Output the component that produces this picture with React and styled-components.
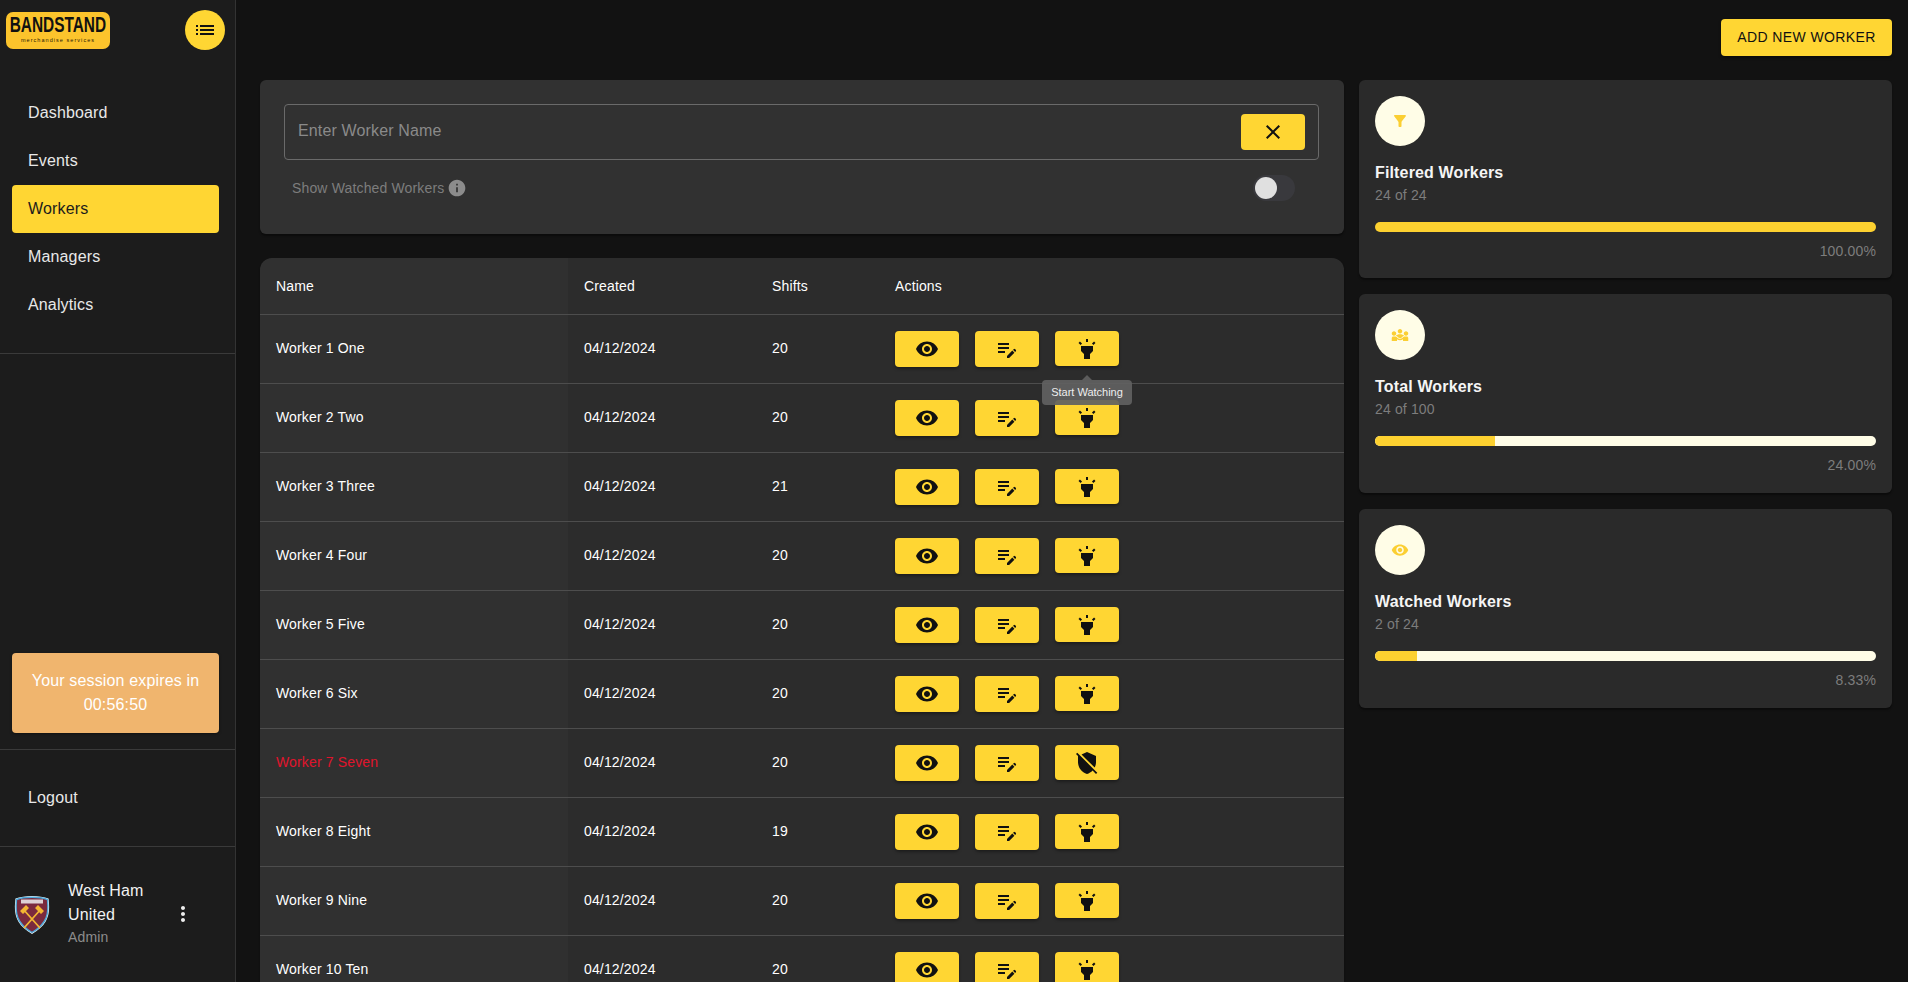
import React from "react";
import styled, { createGlobalStyle } from "styled-components";
import {
  MdVisibility, MdEditNote, MdHighlight, MdRemoveModerator, MdFilterAlt, MdDiversity3,
  MdList, MdClose, MdInfo, MdMoreVert,
} from "react-icons/md";

const Y = "#ffd633";
const FONT = '"Liberation Sans", Arial, sans-serif';

const Global = createGlobalStyle`
  html, body { margin: 0; padding: 0; height: 100%; background: #121212; overflow: hidden; }
  body { font-family: ${FONT}; color: #fff; letter-spacing: .15px; }
  * { box-sizing: border-box; }
`;

const Shell = styled.div`display: flex; height: 982px; overflow: hidden; background: #121212;`;
const Sidebar = styled.aside`
  width: 236px; flex: none; height: 982px; background: #1c1c1c; border-right: 1px solid #333;
  display: flex; flex-direction: column;
`;
const SideHead = styled.div`display: flex; align-items: center; justify-content: space-between; padding: 0 10px 0 6px; height: 60px;`;
const Logo = styled.div`
  width: 104px; height: 37px; background: #fcc42c; border-radius: 7px; color: #111;
  display: flex; flex-direction: column; align-items: center; justify-content: flex-start;
`;
const LogoMain = styled.span`display: block; font: 700 22px/24px ${FONT}; letter-spacing: 0; transform: scaleX(.7); white-space: nowrap; margin-top: 1px;`;
const LogoSub = styled.span`display: block; font: 400 5.5px/7px ${FONT}; letter-spacing: 1.05px; white-space: nowrap; color: #2a2005;`;
const Round = styled.button`
  width: 40px; height: 40px; border: 0; border-radius: 50%; background: ${Y}; color: #111; padding: 0;
  display: flex; align-items: center; justify-content: center; font-size: 24px;
`;
const Nav = styled.nav`padding: 29px 16px 0 12px; display: flex; flex-direction: column;`;
const NavItem = styled.div`
  height: 48px; padding-left: 16px; display: flex; align-items: center; font-size: 16px; border-radius: 4px;
  color: ${p => (p.$active ? "#1c1c1c" : "#e8e8e8")};
  background: ${p => (p.$active ? Y : "transparent")};
`;
const Divider = styled.hr`margin: ${p => p.$m || "0"}; border: 0; border-top: 1px solid #3a3a3a;`;
const Session = styled.div`
  margin: auto 16px 16px 12px; height: 80px; background: #f0b56e; border-radius: 4px; text-align: center;
  color: #fff; font-size: 16px; line-height: 24px; padding-top: 16px;
  box-shadow: 0 1px 3px rgba(0,0,0,.4);
`;
const LogoutRow = styled.div`height: 96px; padding-left: 28px; display: flex; align-items: center; font-size: 16px; color: #e8e8e8;`;
const Profile = styled.div`height: 135px; padding: 0 0 0 14px; display: flex; align-items: center;`;
const Crest = styled.svg`width: 36px; height: 41px; flex: none; margin-right: 18px;`;
const ProfileText = styled.div`width: 90px; font-size: 16px; line-height: 24px; color: #f2f2f2; margin-top: -3px;`;
const ProfileRole = styled.div`font-size: 14px; line-height: 20px; color: #8c8c8c;`;
const More = styled.div`font-size: 24px; color: #eee; display: flex; margin-left: 13px; margin-top: -2px;`;

const Main = styled.main`flex: 1; min-width: 0; padding: 19px 16px 0 24px;`;
const TopBar = styled.div`display: flex; justify-content: flex-end; height: 61px;`;
const AddBtn = styled.button`
  width: 171px; height: 37px; border: 0; border-radius: 4px; background: ${Y}; color: #111; padding: 0 0 1px;
  font: 500 14px ${FONT}; letter-spacing: .4px; box-shadow: 0 2px 3px rgba(0,0,0,.4);
`;
const Columns = styled.div`display: grid; grid-template-columns: 1084px 533px; gap: 15px; align-items: start;`;
const Left = styled.div`display: flex; flex-direction: column; gap: 24px;`;
const Right = styled.div`display: flex; flex-direction: column; gap: 16px;`;
const Card = styled.section`
  background: #2a2a2a;
  border-radius: 6px; box-shadow: 0 2px 2px rgba(0,0,0,.4);
`;
const SearchCard = styled(Card)`height: 154px; padding: 24px 25px 0 24px; background: #313131;`;
const SearchBox = styled.div`
  height: 56px; border: 1px solid #6a6a6a; border-radius: 4px; display: flex; align-items: center;
  justify-content: space-between; padding: 0 13px;
`;
const Placeholder = styled.span`font-size: 16px; color: #8a8a8a; margin-top: -2px;`;
const ClearBtn = styled.button`
  width: 64px; height: 36px; border: 0; border-radius: 4px; background: ${Y}; color: #111; padding: 0;
  display: flex; align-items: center; justify-content: center; font-size: 24px;
`;
const SwitchRow = styled.div`display: flex; align-items: center; justify-content: space-between; padding: 15px 24px 0 8px;`;
const SwitchLabel = styled.div`display: flex; align-items: center; gap: 3px; font-size: 14px; color: #7d7d7d; svg { color: #8c8c8c; }`;
const Track = styled.div`position: relative; width: 42px; height: 26px; border-radius: 13px; background: #39393d;`;
const Thumb = styled.div`position: absolute; left: 2px; top: 2px; width: 22px; height: 22px; border-radius: 50%; background: #e0e0e0;`;

const TableCard = styled(Card)`
  border-radius: 12px 12px 0 0; height: 800px;
  background: linear-gradient(90deg, #303030 308px, #2c2c2c 308px);
`;
const Row = styled.div`
  display: grid; grid-template-columns: 308px 188px 123px 1fr; align-items: center; padding-left: 16px;
  height: ${p => (p.$head ? 57 : 69)}px; border-bottom: 1px solid #4d4d4d; font-size: 14px;
  color: ${p => (p.$red ? "#e0142c" : "#fff")};
`;
const Cell = styled.div`color: ${p => (p.$white ? "#fff" : "inherit")}; margin-top: ${p => (p.$th ? 0 : -2)}px;`;
const Actions = styled.div`display: flex; gap: 16px; align-items: flex-start; position: relative; height: 36px;`;
const ActBtn = styled.button`
  width: 64px; height: ${p => (p.$short ? 35 : 36)}px; border: 0; border-radius: 4px; background: ${Y}; color: #111; padding: 0;
  display: flex; align-items: center; justify-content: center; font-size: 24px; box-shadow: 0 2px 3px rgba(0,0,0,.35);
`;
const Tooltip = styled.div`
  position: absolute; left: 147px; top: 49px; width: 90px; height: 25px; background: rgba(97,97,97,.92); color: #eee;
  border-radius: 4px; font-size: 11px; letter-spacing: 0; line-height: 25px; text-align: center; z-index: 3; white-space: nowrap;
  &::before {
    content: ""; position: absolute; left: 40px; top: -5px; border: 5px solid transparent; border-top: 0;
    border-bottom: 5px solid rgba(97,97,97,.92);
  }
`;

const StatCard = styled(Card)`height: ${p => p.$h}px; padding: 16px;`;
const Circle = styled.div`
  width: 50px; height: 50px; border-radius: 50%; background: #fffde7; color: #fbcf33;
  display: flex; align-items: center; justify-content: center; font-size: 18px;
`;
const StatTitle = styled.div`font-size: 16px; font-weight: 700; line-height: 24px; margin-top: 15px; color: #f5f5f5;`;
const StatSub = styled.div`font-size: 14px; line-height: 20px; color: #7d7d7d;`;
const Bar = styled.div`height: 10px; border-radius: 5px; background: #fffde7; overflow: hidden; margin-top: 17px;`;
const Fill = styled.div`height: 100%; background: #fdd130;`;
const Pct = styled.div`font-size: 14px; line-height: 20px; color: #7d7d7d; text-align: right; margin-top: 9px;`;

const workers = ["Worker 1 One", "Worker 2 Two", "Worker 3 Three", "Worker 4 Four", "Worker 5 Five", "Worker 6 Six", "Worker 7 Seven", "Worker 8 Eight", "Worker 9 Nine", "Worker 10 Ten"];
const shifts = [20, 20, 21, 20, 20, 20, 20, 19, 20, 20];
const stats = [
  { icon: <MdFilterAlt />, title: "Filtered Workers", sub: "24 of 24", pct: 100, h: 198 },
  { icon: <MdDiversity3 />, title: "Total Workers", sub: "24 of 100", pct: 24, h: 199 },
  { icon: <MdVisibility />, title: "Watched Workers", sub: "2 of 24", pct: 8.33, h: 199 },
];

const CrestIcon = () => (
  <Crest viewBox="0 0 36 41">
    <path d="M1.5 4.5C10 1 26 1 34.5 4.5c2 15 0 26-16.500 35.500C1.500 30.500 -.5 19.500 1.500 4.500z" fill="#fff" />
    <path d="M2.500 5.500C10 2.500 26 2.500 33.500 5.500c1.500 14 0 24-15.500 33C2.500 29.500 1 19.500 2.500 5.500z" fill="#7a2a3e" stroke="#4ea8d8" strokeWidth="1.400" />
    <path d="M9 15l17 19M27 15L10 34" stroke="#f2b632" strokeWidth="1.800" />
    <path d="M6 17l6-6 3 3-6 6zM30 17l-6-6-3 3 6 6z" fill="#f2b632" />
    <rect x="7" y="5.500" width="22" height="4" fill="#eeeeee" opacity=".85" />
  </Crest>
);

export default function App() {
  return (
    <Shell>
      <Global />
      <Sidebar>
        <SideHead>
          <Logo>
            <LogoMain>BANDSTAND</LogoMain>
            <LogoSub>merchandise services</LogoSub>
          </Logo>
          <Round><MdList /></Round>
        </SideHead>
        <Nav>
          {["Dashboard", "Events", "Workers", "Managers", "Analytics"].map(n => (
            <NavItem key={n} $active={n === "Workers"}>{n}</NavItem>
          ))}
        </Nav>
        <Divider $m="24px 0 0" />
        <Session>Your session expires in<br />00:56:50</Session>
        <Divider />
        <LogoutRow>Logout</LogoutRow>
        <Divider />
        <Profile>
          <CrestIcon />
          <ProfileText>
            West Ham United
            <ProfileRole>Admin</ProfileRole>
          </ProfileText>
          <More><MdMoreVert /></More>
        </Profile>
      </Sidebar>
      <Main>
        <TopBar><AddBtn>ADD NEW WORKER</AddBtn></TopBar>
        <Columns>
          <Left>
            <SearchCard>
              <SearchBox>
                <Placeholder>Enter Worker Name</Placeholder>
                <ClearBtn><MdClose /></ClearBtn>
              </SearchBox>
              <SwitchRow>
                <SwitchLabel>Show Watched Workers <MdInfo size={20} /></SwitchLabel>
                <Track><Thumb /></Track>
              </SwitchRow>
            </SearchCard>
            <TableCard>
              <Row $head>
                <Cell $th>Name</Cell><Cell $th>Created</Cell><Cell $th>Shifts</Cell><Cell $th>Actions</Cell>
              </Row>
              {workers.map((w, i) => (
                <Row key={w} $red={i === 6}>
                  <Cell>{w}</Cell>
                  <Cell $white>04/12/2024</Cell>
                  <Cell $white>{shifts[i]}</Cell>
                  <Actions>
                    <ActBtn><MdVisibility /></ActBtn>
                    <ActBtn><MdEditNote /></ActBtn>
                    <ActBtn $short>{i === 6 ? <MdRemoveModerator /> : <MdHighlight />}</ActBtn>
                    {i === 0 && <Tooltip>Start Watching</Tooltip>}
                  </Actions>
                </Row>
              ))}
            </TableCard>
          </Left>
          <Right>
            {stats.map(s => (
              <StatCard key={s.title} $h={s.h}>
                <Circle>{s.icon}</Circle>
                <StatTitle>{s.title}</StatTitle>
                <StatSub>{s.sub}</StatSub>
                <Bar><Fill style={{ width: `${s.pct}%` }} /></Bar>
                <Pct>{s.pct.toFixed(2)}%</Pct>
              </StatCard>
            ))}
          </Right>
        </Columns>
      </Main>
    </Shell>
  );
}
